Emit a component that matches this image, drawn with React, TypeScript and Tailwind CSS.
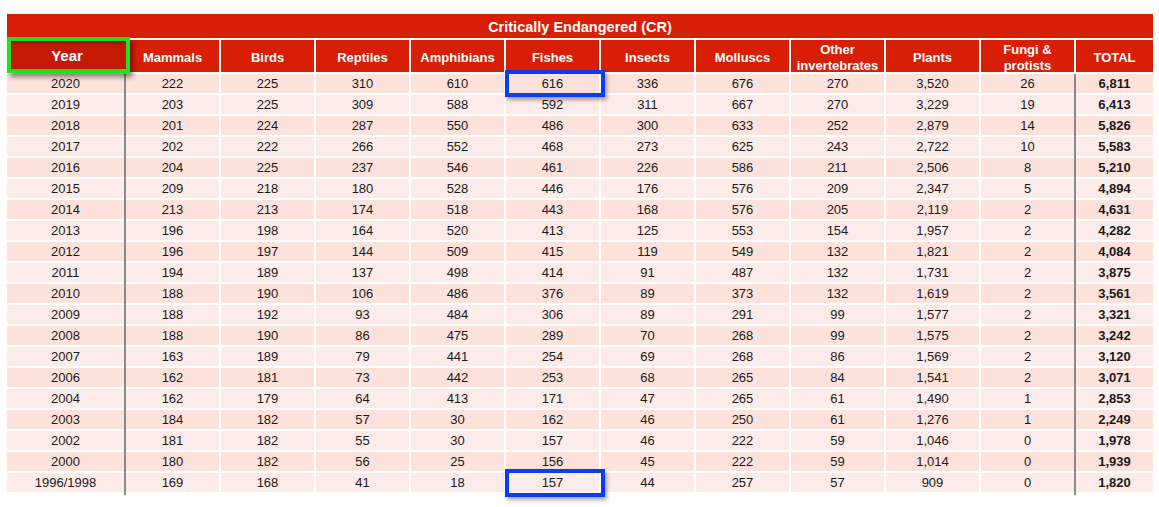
import React from "react";

const cols = [
  "Mammals",
  "Birds",
  "Reptiles",
  "Amphibians",
  "Fishes",
  "Insects",
  "Molluscs",
  "Other invertebrates",
  "Plants",
  "Fungi & protists",
];

const rows: [string, string[], string][] = [
  ["2020", ["222", "225", "310", "610", "616", "336", "676", "270", "3,520", "26"], "6,811"],
  ["2019", ["203", "225", "309", "588", "592", "311", "667", "270", "3,229", "19"], "6,413"],
  ["2018", ["201", "224", "287", "550", "486", "300", "633", "252", "2,879", "14"], "5,826"],
  ["2017", ["202", "222", "266", "552", "468", "273", "625", "243", "2,722", "10"], "5,583"],
  ["2016", ["204", "225", "237", "546", "461", "226", "586", "211", "2,506", "8"], "5,210"],
  ["2015", ["209", "218", "180", "528", "446", "176", "576", "209", "2,347", "5"], "4,894"],
  ["2014", ["213", "213", "174", "518", "443", "168", "576", "205", "2,119", "2"], "4,631"],
  ["2013", ["196", "198", "164", "520", "413", "125", "553", "154", "1,957", "2"], "4,282"],
  ["2012", ["196", "197", "144", "509", "415", "119", "549", "132", "1,821", "2"], "4,084"],
  ["2011", ["194", "189", "137", "498", "414", "91", "487", "132", "1,731", "2"], "3,875"],
  ["2010", ["188", "190", "106", "486", "376", "89", "373", "132", "1,619", "2"], "3,561"],
  ["2009", ["188", "192", "93", "484", "306", "89", "291", "99", "1,577", "2"], "3,321"],
  ["2008", ["188", "190", "86", "475", "289", "70", "268", "99", "1,575", "2"], "3,242"],
  ["2007", ["163", "189", "79", "441", "254", "69", "268", "86", "1,569", "2"], "3,120"],
  ["2006", ["162", "181", "73", "442", "253", "68", "265", "84", "1,541", "2"], "3,071"],
  ["2004", ["162", "179", "64", "413", "171", "47", "265", "61", "1,490", "1"], "2,853"],
  ["2003", ["184", "182", "57", "30", "162", "46", "250", "61", "1,276", "1"], "2,249"],
  ["2002", ["181", "182", "55", "30", "157", "46", "222", "59", "1,046", "0"], "1,978"],
  ["2000", ["180", "182", "56", "25", "156", "45", "222", "59", "1,014", "0"], "1,939"],
  ["1996/1998", ["169", "168", "41", "18", "157", "44", "257", "57", "909", "0"], "1,820"],
];

const rowBg = (i: number) => (i % 2 === 0 ? "bg-[#fde2dc]" : "bg-[#fdebe9]");

export default function App() {
  return (
    <div
      className="relative w-[1159px] h-[507px] bg-white overflow-hidden"
      style={{ fontFamily: '"Liberation Sans", Arial, sans-serif' }}
    >
      <div className="pl-[7px] pt-[14px] w-[1153px]">
        {/* Title row */}
        <div className="h-[24px] bg-[#d81e05] flex items-center justify-center pt-[3px] text-white font-bold text-[14.5px]">
          Critically Endangered (CR)
        </div>
        {/* Column header row */}
        <div className="mt-[2px] flex gap-[2px] h-[32px]">
          <div className="w-[117px] shrink-0 bg-[#d81e05]" />
          {cols.map((c) => (
            <div
              key={c}
              className="w-[93px] shrink-0 bg-[#d81e05] text-white font-bold text-[13px] leading-[16px] flex items-center justify-center text-center pt-[3px] overflow-hidden"
            >
              {c === "Other invertebrates" ? (
                <span>
                  Other
                  <br />
                  invertebrates
                </span>
              ) : c === "Fungi & protists" ? (
                <span className="pt-[1px]">
                  Fungi &amp;
                  <br />
                  protists
                </span>
              ) : (
                c
              )}
            </div>
          ))}
          <div className="w-[77px] shrink-0 bg-[#d81e05] text-white font-bold text-[13px] flex items-center justify-center pt-[3px]">
            TOTAL
          </div>
        </div>
        {/* Body */}
        <div className="mt-[2px] flex text-[13px] text-[#1a1a1a]">
          <div className="w-[117px] shrink-0 flex flex-col gap-[2px]">
            {rows.map((r, i) => (
              <div key={r[0]} className={`h-[19px] flex items-center justify-center ${rowBg(i)}`}>
                {r[0]}
              </div>
            ))}
          </div>
          <div className="w-[2px] shrink-0 bg-[#8a8a8a] mb-[-3px]" />
          <div className="w-[948px] shrink-0 flex flex-col gap-[2px]">
            {rows.map((r, i) => (
              <div key={r[0]} className="flex gap-[2px] h-[19px]">
                {r[1].map((v, j) => (
                  <div
                    key={j}
                    className={`w-[93px] shrink-0 flex items-center justify-center ${rowBg(i)}`}
                  >
                    {v}
                  </div>
                ))}
              </div>
            ))}
          </div>
          <div className="w-[2px] shrink-0 bg-[#8a8a8a] mb-[-3px]" />
          <div className="w-[77px] shrink-0 flex flex-col gap-[2px] font-bold">
            {rows.map((r, i) => (
              <div key={r[0]} className={`h-[19px] flex items-center justify-center ${rowBg(i)}`}>
                {r[2]}
              </div>
            ))}
          </div>
        </div>
      </div>

      {/* Green highlight on Year header */}
      <div className="absolute left-[7px] top-[37px] w-[123px] h-[36px] border-[4px] border-[#1fe31a] bg-[#c41a04] shadow-[3px_4px_5px_rgba(0,0,0,0.45)] flex items-center justify-center pt-[3px]">
        <div className="absolute inset-x-0 top-0 h-[5px] bg-gradient-to-b from-[#8e1303] to-transparent" />
        <span className="relative text-white font-bold text-[15px] pr-[3px]">Year</span>
      </div>

      {/* Blue highlights on Fishes */}
      <div className="absolute left-[505px] top-[70px] w-[100px] h-[27px] border-[4px] border-[#0a3df2] shadow-[2px_3px_4px_rgba(0,0,0,0.35)]" />
      <div className="absolute left-[505px] top-[469px] w-[100px] h-[28px] border-[4px] border-[#0a3df2] shadow-[2px_3px_4px_rgba(0,0,0,0.35)]" />
    </div>
  );
}
